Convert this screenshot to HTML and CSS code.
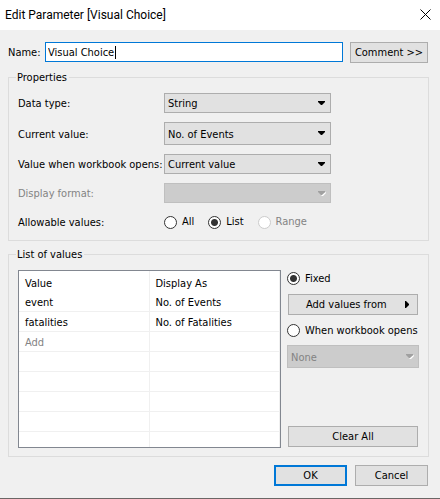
FILE: index.html
```html
<!DOCTYPE html>
<html lang="en">
<head>
<meta charset="utf-8">
<title>Edit Parameter [Visual Choice]</title>
<link rel="stylesheet" href="styles.css">
</head>
<body>
<header class="titlebar">
  <h1 class="title">Edit Parameter [Visual Choice]</h1>
  <button class="close" type="button" aria-label="Close">
    <svg width="11" height="11" viewBox="0 0 11 11"><path d="M.5 .5L10.5 10.5M10.5 .5L.5 10.5" stroke="#000" fill="none"/></svg>
  </button>
</header>
<form class="dialog">
  <div class="name-row">
    <label for="name">Name:</label>
    <div class="name-box">
      <input class="name" id="name" type="text" value="Visual Choice">
      <span class="caret"></span>
    </div>
    <button class="btn comment" type="button">Comment &gt;&gt;</button>
  </div>

  <fieldset class="group">
    <legend>Properties</legend>
    <div class="props">
      <label for="type">Data type:</label>
      <div class="combo">
        <select id="type"><option>String</option></select>
        <svg class="arrow" width="8" height="5" viewBox="0 0 8 5"><path d="M0 0H7V1L4 4H3L0 1Z" fill="#000"/></svg>
      </div>
      <label for="current">Current value:</label>
      <div class="combo tall">
        <select id="current"><option>No. of Events</option></select>
        <svg class="arrow" width="8" height="5" viewBox="0 0 8 5"><path d="M0 0H7V1L4 4H3L0 1Z" fill="#000"/></svg>
      </div>
      <label for="opens">Value when workbook opens:</label>
      <div class="combo">
        <select id="opens"><option>Current value</option></select>
        <svg class="arrow" width="8" height="5" viewBox="0 0 8 5"><path d="M0 0H7V1L4 4H3L0 1Z" fill="#000"/></svg>
      </div>
      <label class="muted" for="format">Display format:</label>
      <div class="combo">
        <select id="format" disabled><option></option></select>
        <svg class="arrow" width="8" height="5" viewBox="0 0 8 5"><path d="M8 1V2L5 5H4L3 4Z" fill="#fff"/><path d="M0 0H7V1L4 4H3L0 1Z" fill="#a0a0a0"/></svg>
      </div>
      <span>Allowable values:</span>
      <div class="radios">
        <label class="radio"><input type="radio" name="allow">All</label>
        <label class="radio"><input type="radio" name="allow" checked>List</label>
        <label class="radio muted"><input type="radio" name="allow" disabled>Range</label>
      </div>
    </div>
  </fieldset>

  <fieldset class="group">
    <legend>List of values</legend>
    <div class="list">
      <div class="grid">
        <table>
          <thead><tr><th>Value</th><th>Display As</th></tr></thead>
          <tbody>
            <tr><td>event</td><td>No. of Events</td></tr>
            <tr><td>fatalities</td><td>No. of Fatalities</td></tr>
            <tr><td class="muted">Add</td><td></td></tr>
            <tr><td></td><td></td></tr>
            <tr><td></td><td></td></tr>
            <tr><td></td><td></td></tr>
            <tr><td></td><td></td></tr>
            <tr><td></td><td></td></tr>
          </tbody>
        </table>
      </div>
      <div class="side">
        <label class="radio"><input type="radio" name="source" checked>Fixed</label>
        <button class="btn from" type="button">Add values from
          <svg width="5" height="8" viewBox="0 0 5 8"><path d="M0 0H1L4 3V4L1 7H0Z" fill="#000"/></svg>
        </button>
        <label class="radio"><input type="radio" name="source">When workbook opens</label>
        <div class="combo tall">
          <select aria-label="Source" disabled><option>None</option></select>
          <svg class="arrow" width="8" height="5" viewBox="0 0 8 5"><path d="M8 1V2L5 5H4L3 4Z" fill="#fff"/><path d="M0 0H7V1L4 4H3L0 1Z" fill="#a0a0a0"/></svg>
        </div>
        <button class="btn clear" type="button">Clear All</button>
      </div>
    </div>
  </fieldset>

  <div class="actions">
    <button class="btn primary" type="button">OK</button>
    <button class="btn" type="button">Cancel</button>
  </div>
</form>
</body>
</html>
```
FILE: styles.css
```css
* { box-sizing: border-box; }

body {
  min-height: 100vh;
  margin: 0;
  background: #f0f0f0;
  border-bottom: 1px solid #6b6665;
  color: #000;
  font: 11px/14px "DejaVu Sans Condensed", Tahoma, sans-serif;
}

.titlebar {
  display: flex;
  align-items: center;
  justify-content: space-between;
  height: 30px;
  padding: 0 9px 2px 5px;
  background: #fff;
}
.title {
  margin: 0;
  padding-top: 2px;
  font: 12px/16px Roboto, "Segoe UI", sans-serif;
}
.close {
  display: flex;
  padding: 0;
  border: 0;
  background: none;
}

.dialog {
  padding: 12px 11px 12px 8px;
}

.name-row {
  display: flex;
  align-items: flex-start;
  gap: 7px;
  padding-right: 1px;
}
.name-row label {
  width: 30px;
  line-height: 22px;
  white-space: nowrap;
}
.name-box {
  position: relative;
  flex: 1;
}
.name {
  display: block;
  width: 100%;
  height: 20px;
  padding: 1px 2px 0;
  border: 1px solid #0078d7;
  outline: 0;
  background: #fff;
  color: inherit;
  font: inherit;
}
.caret {
  position: absolute;
  top: 4px;
  left: 70px;
  width: 1px;
  height: 13px;
  background: #000;
}

.btn {
  width: 73px;
  height: 21px;
  padding: 0;
  border: 1px solid #adadad;
  background: #e1e1e1;
  color: inherit;
  font: inherit;
}
.comment { width: 78px; }
.primary { border: 2px solid #0078d7; }

.group {
  min-width: 0;
  margin: 7px 0 0;
  padding: 0 9px 8px;
  border: 1px solid #dcdcdc;
}
legend {
  margin-left: -2px;
  padding: 0 2px 0 1px;
  line-height: 13px;
}

.props {
  display: grid;
  grid-template-columns: 136px 167px;
  gap: 9px 10px;
  align-items: center;
  padding-top: 9px;
}
.props > label,
.props > span {
  padding-top: 2px;
  white-space: nowrap;
}

.combo {
  position: relative;
  height: 20px;
}
.combo.tall { height: 23px; }
select {
  appearance: none;
  display: block;
  width: 100%;
  height: 100%;
  padding: 2px 3px 0;
  border: 1px solid #adadad;
  border-radius: 0;
  background: #e1e1e1;
  color: #000;
  font: inherit;
}
select:disabled {
  border-color: #bfbfbf;
  background: #ccc;
  color: #838383;
  opacity: 1;
}
.arrow {
  position: absolute;
  top: 8px;
  right: 5px;
  pointer-events: none;
}
.tall .arrow { top: 9px; }

.muted { color: #838383; }

.radios {
  display: flex;
  gap: 14px;
  height: 20px;
}
.radio {
  display: flex;
  align-items: center;
  gap: 5px;
  white-space: nowrap;
}
input[type="radio"] {
  appearance: none;
  flex: none;
  width: 13px;
  height: 13px;
  margin: 0;
  border: 1px solid #333;
  border-radius: 50%;
  background: #fff;
}
input[type="radio"]:checked {
  background: radial-gradient(circle, #333 3px, #fff 4px);
}
input[type="radio"]:disabled { border-color: #ccc; }

.list {
  display: flex;
  gap: 6px;
  padding-top: 9px;
}
.grid {
  flex: 1;
  height: 178px;
  overflow: hidden;
  border: 1px solid #828790;
  background: #fff;
}
table {
  width: 100%;
  border-spacing: 0;
  table-layout: fixed;
}
th, td {
  height: 20px;
  padding: 3px 6px 0;
  border-right: 1px solid #f0f0f0;
  text-align: left;
  font-weight: normal;
  line-height: 16px;
}
td { border-bottom: 1px solid #f0f0f0; }
th {
  height: 21px;
  padding-top: 4px;
}

.side {
  display: flex;
  flex-direction: column;
  width: 132px;
}
.side .radio { height: 17px; }
.side .btn {
  width: auto;
  margin: 0 1px;
}
.side .from {
  display: flex;
  align-items: center;
  justify-content: space-between;
  margin: 7px 1px;
  padding: 0 7px 0 17px;
}
.side .combo { margin-top: 6px; }
.side .clear { margin: auto 1px 1px; }

.actions {
  display: flex;
  justify-content: flex-end;
  gap: 8px;
  padding: 8px 1px 0 0;
}
```
